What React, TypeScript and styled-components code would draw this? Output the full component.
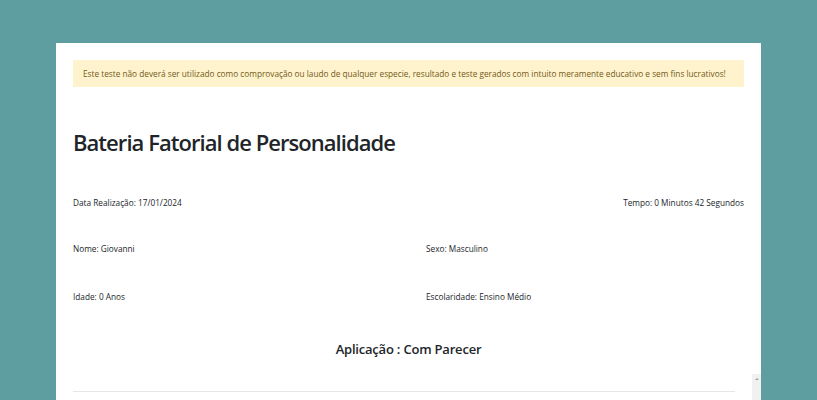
import React from "react";
import styled, { createGlobalStyle } from "styled-components";

const Global = createGlobalStyle`
  html, body { margin: 0; padding: 0; }
  body {
    background: #5f9ea0;
    font-family: "Open Sans", "Noto Sans", sans-serif;
    color: #212529;
    height: 400px;
    overflow: hidden;
  }
`;

const Page = styled.div`
  padding: 43px 56px 0 56px;
`;

const Card = styled.div`
  background: #ffffff;
  height: 357px;
  display: flex;
  flex-direction: column;
`;

const Top = styled.div`
  padding: 17px 17px 0 17px;
  display: flex;
  flex-direction: column;
`;

const Alert = styled.div`
  background: #fff3cd;
  color: #725a1a;
  font-size: 8.25px;
  line-height: 27px;
  height: 27px;
  padding: 0 10px;
  white-space: nowrap;
`;

const Title = styled.h1`
  margin: 41px 0 0 0;
  font-size: 22px;
  letter-spacing: -0.95px;
  line-height: 29px;
  font-weight: 540;
  color: #212529;
`;

const Row = styled.div<{ $top: number }>`
  margin-top: ${(p) => p.$top}px;
  display: grid;
  grid-template-columns: 353px 1fr;
  font-size: 8.25px;
  line-height: 12px;
  color: #212529;
`;

const Split = styled.div<{ $top: number }>`
  margin-top: ${(p) => p.$top}px;
  display: flex;
  justify-content: space-between;
  font-size: 8.25px;
  line-height: 12px;
  color: #212529;
`;

const Subtitle = styled.h4`
  margin: 0;
  margin-top: 37px;
  text-align: center;
  font-size: 13px;
  letter-spacing: -0.2px;
  line-height: 18px;
  font-weight: 550;
  color: #212529;
`;

const ScrollArea = styled.div`
  margin-top: 16px;
  flex: 1;
  display: flex;
  min-height: 0;
`;

const ScrollContent = styled.div`
  flex: 1;
  padding: 0 17px;
`;

const Rule = styled.hr`
  margin: 17px 0 0 0;
  border: 0;
  border-top: 1px solid #e6e6e6;
`;

const ScrollTrack = styled.div`
  width: 9px;
  background: #f1f1f1;
  display: flex;
  justify-content: center;
  padding-top: 4px;
  box-sizing: border-box;
`;

const Arrow = styled.div`
  width: 0;
  height: 0;
  border-left: 2px solid transparent;
  border-right: 2px solid transparent;
  border-bottom: 2px solid #a3a3a3;
`;

export default function App() {
  return (
    <>
      <Global />
      <Page>
        <Card>
          <Top>
            <Alert>
              Este teste não deverá ser utilizado como comprovação ou laudo de qualquer especie, resultado e teste gerados com intuito meramente educativo e sem fins lucrativos!
            </Alert>
            <Title>Bateria Fatorial de Personalidade</Title>
            <Split $top={40}>
              <span>Data Realização: 17/01/2024</span>
              <span>Tempo: 0 Minutos 42 Segundos</span>
            </Split>
            <Row $top={34}>
              <span>Nome: Giovanni</span>
              <span>Sexo: Masculino</span>
            </Row>
            <Row $top={36}>
              <span>Idade: 0 Anos</span>
              <span>Escolaridade: Ensino Médio</span>
            </Row>
            <Subtitle>Aplicação : Com Parecer</Subtitle>
          </Top>
          <ScrollArea>
            <ScrollContent>
              <Rule />
            </ScrollContent>
            <ScrollTrack>
              <Arrow />
            </ScrollTrack>
          </ScrollArea>
        </Card>
      </Page>
    </>
  );
}
